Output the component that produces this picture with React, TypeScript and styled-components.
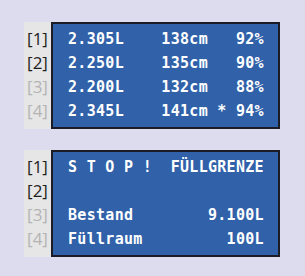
import React from 'react'
import styled, { createGlobalStyle } from 'styled-components'

const GlobalStyle = createGlobalStyle`
  body {
    margin: 0;
    background: #dcdcee;
  }
`

const Page = styled.div`
  width: 305px;
  height: 276px;
  box-sizing: border-box;
  padding: 22px 0 0 24px;
  display: flex;
  flex-flow: column nowrap;
  gap: 21px;
`

const Panel = styled.div`
  display: flex;
  width: 256px;
  height: 107px;
  background: #e6e6e6;
`

const LabelColumn = styled.div`
  width: 27px;
  padding-top: 5px;
  display: flex;
  flex-flow: column nowrap;
  align-items: center;
`

const Label = styled.div<{ $dim?: boolean }>`
  height: 24px;
  line-height: 24px;
  font-family: 'Open Sans', sans-serif;
  font-size: 17px;
  color: ${(p) => (p.$dim ? '#b4b4b4' : '#1e1e1e')};
`

const Screen = styled.div`
  flex: 1;
  border: 2px solid #1b1b26;
  background: #3061a9;
  padding: 3px 0 0 15px;
`

const Line = styled.div`
  height: 24px;
  line-height: 24px;
  white-space: pre;
  font-family: 'DejaVu Sans Mono', monospace;
  font-weight: bold;
  font-size: 15px;
  letter-spacing: 0.3px;
  color: #ffffff;
`

const labels = ['[1]', '[2]', '[3]', '[4]']

const Display = ({ lines }: { lines: string[] }) => (
  <Panel>
    <LabelColumn>
      {labels.map((l, i) => (
        <Label key={l} $dim={i > 1}>
          {l}
        </Label>
      ))}
    </LabelColumn>
    <Screen>
      {lines.map((line, i) => (
        <Line key={i}>{line}</Line>
      ))}
    </Screen>
  </Panel>
)

const levels = [
  '2.305L    138cm   92%',
  '2.250L    135cm   90%',
  '2.200L    132cm   88%',
  '2.345L    141cm * 94%',
]

const stop = [
  'S T O P !  FÜLLGRENZE',
  ' ',
  'Bestand        9.100L',
  'Füllraum         100L',
]

export default function App() {
  return (
    <>
      <GlobalStyle />
      <Page>
        <Display lines={levels} />
        <Display lines={stop} />
      </Page>
    </>
  )
}
